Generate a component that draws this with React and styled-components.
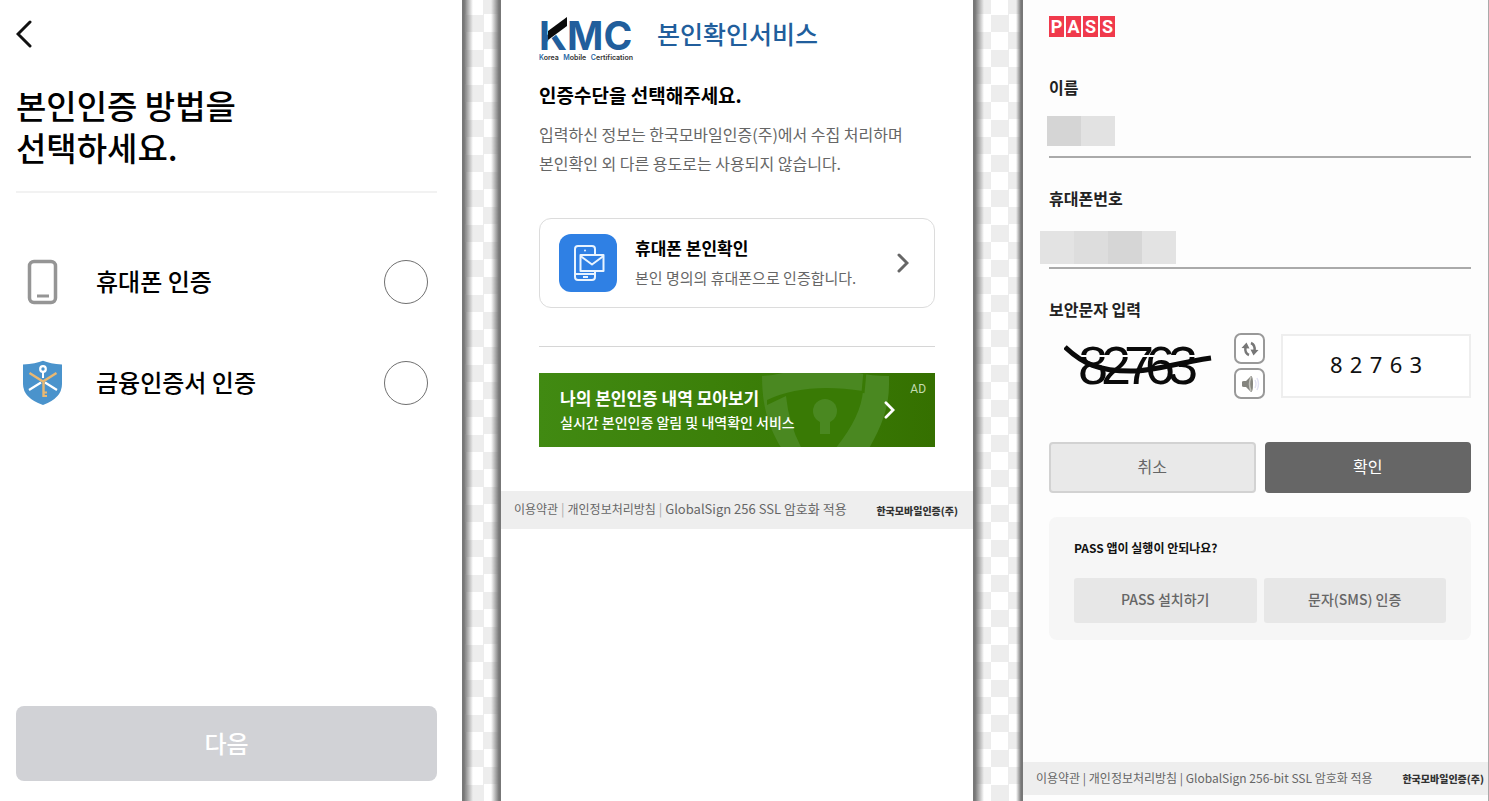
import React, { useState } from 'react';
import styled, { createGlobalStyle } from 'styled-components';

function PhoneIcon() {
  return (
    <svg width="44" height="46" viewBox="0 0 44 46" fill="none" aria-hidden="true">
      <rect x="8.5" y="2.5" width="26" height="41" rx="4.5" stroke="#959595" strokeWidth="3.5" />
      <path d="M16 37h12" stroke="#959595" strokeWidth="3" />
    </svg>
  );
}

function ShieldKeyIcon() {
  return (
    <svg width="44" height="46" viewBox="0 0 44 46" fill="none" aria-hidden="true">
      <path d="M2 4.5Q15 3.8 22 .8Q29 3.8 41 4.5V24Q41 38 22 45Q2 38 2 24Z" fill="#4a93cc" />
      <path d="M8 30L20 22.5M36 30L24 22.5" stroke="#fff" strokeWidth="2.2" />
      <path d="M8.5 13L22 21.5L35.5 13M22.5 21V37" stroke="#e9b872" strokeWidth="2.4" />
      <path d="M22 32.5h4M22 36h4" stroke="#e9b872" strokeWidth="2" />
      <circle cx="22" cy="9" r="2.8" stroke="#fff" strokeWidth="2.2" />
      <path d="M22 12v6" stroke="#fff" strokeWidth="2" />
    </svg>
  );
}

function KmcLogo() {
  return (
    <svg width="96" height="46" viewBox="0 -8 96 46" overflow="visible" role="img" aria-label="KMC">
      <text x="0" y="34" fontFamily="Inter, sans-serif" fontSize="39" fontWeight="700" fill="#215e9c">
        KMC
      </text>
      <path d="M9 0H30V9L9 25Z" fill="#fff" />
      <path d="M9 15L28 1V10L9 24Z" fill="#0b0b0b" />
    </svg>
  );
}

function PhoneMailIcon() {
  return (
    <svg width="58" height="58" viewBox="0 0 58 58" fill="none" aria-hidden="true">
      <rect width="58" height="58" rx="12" fill="#2f80e4" />
      <g stroke="#e9f4ff" strokeWidth="2" strokeLinejoin="round">
        <path d="M36 20V15Q36 12 33 12H19Q16 12 16 15V43Q16 46 19 46H33Q36 46 36 43V38" />
        <path d="M16 40H36M24 43h5" />
        <rect x="21.5" y="21" width="23" height="16" />
        <path d="M21.5 22L33 30.5L44.5 22" />
      </g>
      <circle cx="26" cy="16.5" r="1" fill="#e9f4ff" />
    </svg>
  );
}

function Chevron({ size, color, width }) {
  return (
    <svg width={size / 2 + 2} height={size} viewBox="0 0 12 20" fill="none" aria-hidden="true">
      <path d="M2 2L10 10L2 18" stroke={color} strokeWidth={width} strokeLinecap="round" />
    </svg>
  );
}

function BannerShield() {
  return (
    <svg width="140" height="74" viewBox="0 0 140 74" aria-hidden="true">
      <path
        d="M7 3Q25 2 41-4H92Q107 3 134 3V12C134 38 124 59 109 84H32C16 60 7 38 7 3Z"
        fill="#4a8821"
      />
      <path d="M12 27Q50 9 108 18Q106 44 80 76H47Q34 52 31 23L12 32Z" fill="#397a05" />
      <path d="M108 20L110-2" stroke="#397a05" strokeWidth="3" />
      <circle cx="70" cy="38" r="12" fill="#4a8821" />
      <path d="M65 44H75V61H65Z" fill="#4a8821" />
    </svg>
  );
}

function CaptchaDrawing() {
  return (
    <svg width="150" height="70" viewBox="0 -4 150 70" role="img" aria-label="82763">
      <text
        x="14 37 60 81 104"
        y="49"
        fontFamily="'Liberation Sans', sans-serif"
        fontSize="54"
        fill="#0a0a0a"
      >
        82763
      </text>
      <path d="M14 21H134" stroke="#fdfdfd" strokeWidth="2" />
      <path d="M1 12C18 28 34 37 72 36C94 35 112 28 147 23" fill="none" stroke="#0a0a0a" strokeWidth="5" />
    </svg>
  );
}

function RefreshIcon() {
  return (
    <svg width="20" height="20" viewBox="0 0 20 20" fill="none" aria-hidden="true">
      <path d="M9 16Q4.5 14 5.5 8M11 4Q15.5 6 14.5 12" stroke="#777" strokeWidth="2.5" />
      <path d="M1.5 9L6.5 3.5L9.5 9.5ZM18.5 11L13.5 16.5L10.5 10.5Z" fill="#777" />
    </svg>
  );
}

function SpeakerIcon() {
  return (
    <svg width="20" height="20" viewBox="0 0 20 20" fill="none" aria-hidden="true">
      <path d="M2 8Q2 7 4 7H6L11 2Q13 2 13 10T11 18L6 13H4Q2 13 2 12Z" fill="#85857f" />
      <path d="M11 3Q8 10 11 17" stroke="#c4c4be" strokeWidth="1.5" />
      <path d="M15 6Q17 10 15 14M17 4Q20 10 17 16" stroke="#e2e2f3" strokeWidth="1.5" />
    </svg>
  );
}

const methods = [
  { id: 'phone', label: '휴대폰 인증', Icon: PhoneIcon },
  { id: 'cert', label: '금융인증서 인증', Icon: ShieldKeyIcon },
];

function MethodPanel() {
  const [method, setMethod] = useState('');

  return (
    <SelectPanel>
      <BackButton type="button" aria-label="뒤로">
        <svg width="18" height="28" viewBox="0 0 18 28" fill="none" aria-hidden="true">
          <path d="M14 2L2 14L14 26" stroke="#111" strokeWidth="3" strokeLinecap="round" />
        </svg>
      </BackButton>
      <MainTitle>
        본인인증 방법을
        <br />
        선택하세요.
      </MainTitle>
      <MethodList>
        {methods.map(({ id, label, Icon }) => (
          <MethodRow key={id} htmlFor={id}>
            <Icon />
            <MethodName>{label}</MethodName>
            <Radio
              id={id}
              type="radio"
              name="method"
              checked={method === id}
              onChange={() => setMethod(id)}
            />
          </MethodRow>
        ))}
      </MethodList>
      <NextButton type="button">다음</NextButton>
    </SelectPanel>
  );
}

function KmcPanel() {
  return (
    <Panel>
      <KmcBody>
        <KmcHeader>
          <KmcBrand>
            <KmcLogo />
            <KmcTagline>
              <span>Korea</span> <span>Mobile</span> <span>Certification</span>
            </KmcTagline>
          </KmcBrand>
          <KmcTitle>본인확인서비스</KmcTitle>
        </KmcHeader>
        <KmcHeading>인증수단을 선택해주세요.</KmcHeading>
        <KmcText>
          입력하신 정보는 한국모바일인증(주)에서 수집 처리하며
          <br />
          본인확인 외 다른 용도로는 사용되지 않습니다.
        </KmcText>
        <OptionCard type="button">
          <PhoneMailIcon />
          <OptionText>
            <OptionTitle>휴대폰 본인확인</OptionTitle>
            <OptionDesc>본인 명의의 휴대폰으로 인증합니다.</OptionDesc>
          </OptionText>
          <Chevron size={20} color="#666" width={3} />
        </OptionCard>
        <Divider />
        <Banner href="#history">
          <BannerArt>
            <BannerShield />
          </BannerArt>
          <BannerText>
            <BannerTitle>나의 본인인증 내역 모아보기</BannerTitle>
            <BannerDesc>실시간 본인인증 알림 및 내역확인 서비스</BannerDesc>
          </BannerText>
          <BannerArrow>
            <Chevron size={18} color="#fff" width={3} />
          </BannerArrow>
          <AdMark>AD</AdMark>
        </Banner>
      </KmcBody>
      <Footer $size={13} $height={38}>
        <FooterLinks>
          <a href="#terms">이용약관</a> <i>|</i> <a href="#privacy">개인정보처리방침</a> <i>|</i>{' '}
          GlobalSign 256 SSL 암호화 적용
        </FooterLinks>
        <Company>한국모바일인증(주)</Company>
      </Footer>
    </Panel>
  );
}

function PassPanel() {
  const [code, setCode] = useState('8\u20042\u20047\u20046\u20043');

  return (
    <PassShell>
      <PassBody>
        <PassLogo>
          {['P', 'A', 'S', 'S'].map((letter, i) => (
            <PassTile key={i}>{letter}</PassTile>
          ))}
        </PassLogo>
        <Field>
          <FieldLabel htmlFor="name">이름</FieldLabel>
          <LineInput id="name" type="text" />
          <Mosaic $left="-2px" $top="40px" $height="30px">
            <MosaicCell $color="#d5d5d5" />
            <MosaicCell $color="#e2e2e2" />
          </Mosaic>
        </Field>
        <Field>
          <FieldLabel htmlFor="tel">휴대폰번호</FieldLabel>
          <LineInput id="tel" type="tel" />
          <Mosaic $left="-9px" $top="44px" $height="33px">
            <MosaicCell $color="#e3e3e3" />
            <MosaicCell $color="#dddddd" />
            <MosaicCell $color="#d6d6d6" />
            <MosaicCell $color="#e3e3e3" />
          </Mosaic>
        </Field>
        <FieldLabel htmlFor="captcha">보안문자 입력</FieldLabel>
        <CaptchaRow>
          <CaptchaImage>
            <CaptchaDrawing />
          </CaptchaImage>
          <CaptchaTools>
            <ToolButton type="button" aria-label="새로고침">
              <RefreshIcon />
            </ToolButton>
            <ToolButton type="button" aria-label="음성듣기">
              <SpeakerIcon />
            </ToolButton>
          </CaptchaTools>
          <CaptchaInput
            id="captcha"
            type="text"
            value={code}
            onChange={(e) => setCode(e.target.value)}
          />
        </CaptchaRow>
        <ActionRow>
          <ActionButton type="button">취소</ActionButton>
          <ActionButton type="button" $primary>
            확인
          </ActionButton>
        </ActionRow>
        <HelpBox>
          <HelpTitle>PASS 앱이 실행이 안되나요?</HelpTitle>
          <HelpRow>
            <HelpButton type="button">PASS 설치하기</HelpButton>
            <HelpButton type="button">문자(SMS) 인증</HelpButton>
          </HelpRow>
        </HelpBox>
      </PassBody>
      <Footer $size={12} $height={33}>
        <FooterLinks>
          <a href="#terms">이용약관</a> | <a href="#privacy">개인정보처리방침</a> | GlobalSign
          256-bit SSL 암호화 적용
        </FooterLinks>
        <Company>한국모바일인증(주)</Company>
      </Footer>
    </PassShell>
  );
}

function App() {
  return (
    <>
      <GlobalStyle />
      <Page>
        <MethodPanel />
        <Gutter $fade="10px" />
        <KmcPanel />
        <Gutter $fade="7px" />
        <PassPanel />
      </Page>
    </>
  );
}

const GlobalStyle = createGlobalStyle`
  * {
    box-sizing: border-box;
  }

  body {
    margin: 0;
    background-color: #fff;
    color: #111;
    font-family: 'Noto Sans CJK KR', sans-serif;
  }

  button, input {
    font-family: inherit;
  }

  h1, h2, h3, p {
    margin: 0;
  }

  a {
    color: inherit;
    text-decoration: none;
  }
`;

const Page = styled.main`
  min-height: 100vh;
  display: grid;
  grid-template-columns: minmax(0, 462fr) 39px minmax(0, 472fr) 50px minmax(0, 466fr);
  background: conic-gradient(#ededed 25%, #fff 0 50%, #ededed 0 75%, #fff 0) 11px 32px / 35px 35px;
`;

const Gutter = styled.div`
  background:
    linear-gradient(to right, #777 2px, rgba(119, 119, 119, 0) 11px),
    linear-gradient(to left, #777 2px, rgba(119, 119, 119, 0) ${(props) => props.$fade});
`;

const Panel = styled.section`
  display: flex;
  flex-direction: column;
  background-color: #fff;
`;

const SelectPanel = styled(Panel)`
  padding: 20px 25px 20px 16px;
`;

const BackButton = styled.button`
  display: flex;
  width: 32px;
  padding: 0;
  border: 0;
  background: none;
`;

const MainTitle = styled.h1`
  padding: 36px 0 23px;
  border-bottom: 2px solid #f2f2f2;
  color: #000;
  font-size: 33px;
  font-weight: 500;
  line-height: 42px;
`;

const MethodList = styled.div`
  display: grid;
  gap: 55px;
  padding: 66px 9px 40px 5px;
`;

const MethodRow = styled.label`
  display: flex;
  align-items: center;
  height: 46px;
`;

const MethodName = styled.span`
  flex: 1;
  padding: 0 0 3px 31px;
  color: #000;
  font-size: 24px;
  font-weight: 500;
`;

const Radio = styled.input`
  appearance: none;
  width: 44px;
  height: 44px;
  margin: 0;
  border: 1px solid #707070;
  border-radius: 50%;

  &:checked {
    border: 12px solid #4a93cc;
  }
`;

const NextButton = styled.button`
  height: 75px;
  margin-top: auto;
  padding-bottom: 4px;
  border: 0;
  border-radius: 8px;
  background-color: #d1d2d6;
  color: #fff;
  font-size: 24px;
  font-weight: 500;
`;

const KmcBody = styled.div`
  padding: 8px 38px 44px;
`;

const KmcHeader = styled.header`
  display: flex;
  align-items: flex-start;
  gap: 22px;
`;

const KmcBrand = styled.div`
  display: grid;
`;

const KmcTagline = styled.p`
  display: flex;
  justify-content: space-between;
  width: 94px;
  height: 8px;
  color: #333;
  font-family: Inter, sans-serif;
  font-size: 7px;
  font-weight: 600;
  line-height: 8px;

  span::first-letter {
    color: #2b6aa8;
  }
`;

const KmcTitle = styled.h2`
  color: #215e9c;
  font-size: 25px;
  font-weight: 500;
  line-height: 50px;
`;

const KmcHeading = styled.h3`
  padding: 19px 0 11px;
  color: #000;
  font-size: 19px;
  font-weight: 700;
  line-height: 28px;
`;

const KmcText = styled.p`
  color: #666;
  font-size: 16px;
  line-height: 29px;
  white-space: nowrap;
`;

const OptionCard = styled.button`
  display: flex;
  align-items: center;
  width: 100%;
  height: 90px;
  margin-top: 40px;
  padding: 0 25px 0 19px;
  border: 1px solid #dcdcdc;
  border-radius: 12px;
  background-color: #fff;
  text-align: left;
`;

const OptionText = styled.span`
  flex: 1;
  display: grid;
  padding-left: 18px;
  line-height: 30px;
`;

const OptionTitle = styled.strong`
  color: #000;
  font-size: 17px;
  font-weight: 700;
`;

const OptionDesc = styled.span`
  color: #666;
  font-size: 15px;
`;

const Divider = styled.hr`
  height: 1px;
  margin: 38px 0 26px;
  border: 0;
  background-color: #d6d6d6;
`;

const Banner = styled.a`
  position: relative;
  display: flex;
  align-items: center;
  height: 74px;
  padding: 0 40px 0 21px;
  background: linear-gradient(to right, #418a12, #397a05 70%, #357000);
  color: #fff;
`;

const BannerArt = styled.span`
  position: absolute;
  top: 0;
  right: 40px;
  height: 74px;
`;

const BannerText = styled.span`
  position: relative;
  flex: 1;
  display: grid;
  line-height: 25px;
`;

const BannerTitle = styled.strong`
  font-size: 17px;
  font-weight: 700;
`;

const BannerDesc = styled.span`
  font-size: 14px;
  font-weight: 500;
`;

const BannerArrow = styled.span`
  position: relative;
  display: flex;
`;

const AdMark = styled.span`
  position: absolute;
  top: 8px;
  right: 9px;
  color: #c4dbb2;
  font-family: Roboto, sans-serif;
  font-size: 12px;
  line-height: 16px;
`;

const Footer = styled.footer`
  display: flex;
  align-items: center;
  justify-content: space-between;
  height: ${(props) => props.$height}px;
  padding: 0 15px 0 13px;
  background-color: #eee;
  color: #666;
  font-size: ${(props) => props.$size}px;
  white-space: nowrap;
`;

const FooterLinks = styled.p`
  padding-bottom: 3px;

  a {
    font-size: 12px;
  }

  i {
    color: #aaa;
    font-style: normal;
  }
`;

const Company = styled.strong`
  color: #333;
  font-size: 10px;
  font-weight: 900;
`;

const PassShell = styled(Panel)`
  padding-bottom: 6px;
  background-color: #fdfdfd;
  border-right: 1px solid #aaa;

  ${Footer} {
    margin-top: auto;
    padding-right: 4px;
  }
`;

const PassBody = styled.div`
  padding: 16px 17px 40px 26px;
`;

const PassLogo = styled.div`
  display: flex;
  gap: 2px;
  margin-bottom: 39px;
`;

const PassTile = styled.span`
  width: 15px;
  height: 21px;
  background-color: #f03a4c;
  color: #fff;
  font-family: Roboto, sans-serif;
  font-size: 18px;
  font-weight: 700;
  line-height: 21px;
  text-align: center;
`;

const Field = styled.div`
  position: relative;
  margin-bottom: 29px;
`;

const FieldLabel = styled.label`
  display: block;
  padding-bottom: 2px;
  color: #222;
  font-size: 16px;
  font-weight: 700;
  line-height: 22px;
`;

const LineInput = styled.input`
  display: block;
  width: 100%;
  height: 58px;
  padding: 0;
  border: 0;
  border-bottom: 2px solid #aaa;
  background: none;
  font-size: 18px;
`;

const Mosaic = styled.div`
  position: absolute;
  top: ${(props) => props.$top};
  left: ${(props) => props.$left};
  display: flex;
  height: ${(props) => props.$height};
`;

const MosaicCell = styled.span`
  width: 34px;
  background-color: ${(props) => props.$color};
`;

const CaptchaRow = styled.div`
  display: flex;
  align-items: center;
  margin-top: 9px;
`;

const CaptchaImage = styled.div`
  flex: 1;
  display: flex;
  padding-left: 15px;
`;

const CaptchaTools = styled.div`
  display: grid;
  gap: 4px;
  margin: 0 16px;
`;

const ToolButton = styled.button`
  display: flex;
  align-items: center;
  justify-content: center;
  width: 31px;
  height: 31px;
  padding: 0;
  border: 2px solid #999;
  border-radius: 7px;
  background-color: #fff;
`;

const CaptchaInput = styled.input`
  width: 45%;
  height: 64px;
  padding: 0 0 4px;
  border: 2px solid #eee;
  background-color: #fff;
  color: #111;
  font-family: 'Noto Sans', sans-serif;
  font-size: 22px;
  text-align: center;
`;

const ActionRow = styled.div`
  display: grid;
  grid-template-columns: 1fr 1fr;
  gap: 9px;
  margin-top: 41px;
`;

const ActionButton = styled.button`
  height: 51px;
  padding-bottom: 4px;
  border: 2px solid ${(props) => (props.$primary ? '#666' : '#d2d2d2')};
  border-radius: 4px;
  background-color: ${(props) => (props.$primary ? '#666' : '#e9e9e9')};
  color: ${(props) => (props.$primary ? '#fff' : '#666')};
  font-size: 16px;
`;

const HelpBox = styled.section`
  margin-top: 24px;
  padding: 20px 25px 17px;
  border-radius: 8px;
  background-color: #f6f6f6;
`;

const HelpTitle = styled.h3`
  margin-bottom: 19px;
  font-size: 12px;
  font-weight: 700;
  line-height: 22px;
`;

const HelpRow = styled.div`
  display: grid;
  grid-template-columns: 1fr 1fr;
  gap: 7px;
`;

const HelpButton = styled.button`
  height: 45px;
  padding-bottom: 4px;
  border: 0;
  border-radius: 3px;
  background-color: #e7e7e7;
  color: #666;
  font-size: 14px;
  font-weight: 500;
`;

export default App;
